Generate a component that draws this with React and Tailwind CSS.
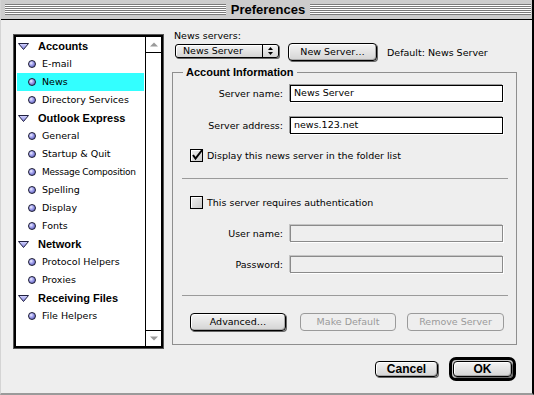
import React from "react";

const items = [
  { h: "Accounts" },
  { t: "E-mail" },
  { t: "News", sel: true },
  { t: "Directory Services" },
  { h: "Outlook Express" },
  { t: "General" },
  { t: "Startup & Quit" },
  { t: "Message Composition", tight: true },
  { t: "Spelling" },
  { t: "Display" },
  { t: "Fonts" },
  { h: "Network" },
  { t: "Protocol Helpers" },
  { t: "Proxies" },
  { h: "Receiving Files" },
  { t: "File Helpers" },
];

function Tri() {
  return (
    <svg width="11" height="7" viewBox="0 0 11 7" className="shrink-0">
      <defs>
        <linearGradient id="tg" x1="0" y1="0" x2="0" y2="1">
          <stop offset="0" stopColor="#d8d8ff" />
          <stop offset="1" stopColor="#8080e0" />
        </linearGradient>
      </defs>
      <path d="M0.5 0.5 H10.5 L5.5 6.5 Z" fill="url(#tg)" stroke="#202040" strokeWidth="1" strokeLinejoin="round" />
    </svg>
  );
}

function Bullet() {
  return (
    <span className="block w-[8px] h-[8px] shrink-0 rounded-full border border-[#1a1a33] bg-[radial-gradient(circle_at_35%_35%,#f0f0ff_0%,#a0a0ee_40%,#4a4aa0_100%)]" />
  );
}

function Btn({ children, className = "", disabled }) {
  return (
    <div
      className={`flex items-center justify-center whitespace-nowrap rounded-[4px] border text-[9.5px] leading-[12px] ${
        disabled
          ? "border-[#9a9a9a] text-[#9a9a9a] bg-[#eeeeee]"
          : "border-black text-black bg-[linear-gradient(#f4f4f4,#d4d4d4)] shadow-[inset_1px_1px_0_#ffffff,inset_-1px_-1px_0_#a8a8a8,1px_1px_0_#666666]"
      } ${className}`}
    >
      {children}
    </div>
  );
}

function CheckBox({ checked }) {
  return (
    <svg width="14" height="13" viewBox="0 0 14 13" className="shrink-0 overflow-visible">
      <defs>
        <linearGradient id="cbg" x1="0" y1="0" x2="1" y2="1">
          <stop offset="0" stopColor="#f2f2f2" />
          <stop offset="1" stopColor="#c8c8c8" />
        </linearGradient>
      </defs>
      <rect x="0.5" y="0.5" width="12" height="12" fill="url(#cbg)" stroke="#000" />
      <path d="M1.5 11.5 V1.5 H11.5" fill="none" stroke="#ffffff" />
      {checked && (
        <path d="M3 6 L5.5 9.5 L12.5 0.5" fill="none" stroke="#000" strokeWidth="2" strokeLinejoin="miter" />
      )}
    </svg>
  );
}

function Field({ label, value, disabled, className = "" }) {
  return (
    <div className={`flex items-center h-[17px] ${className}`}>
      <div className="w-[110px] text-right whitespace-nowrap text-[9.5px] leading-[12px]">{label}</div>
      <div
        className={`ml-[7px] w-[213px] h-[17px] flex items-center pl-[3px] text-[9.5px] ${
          disabled
            ? "border border-[#8a8a8a] bg-[#eeeeee] shadow-[-1px_-1px_0_#c4c4c4,1px_1px_0_#ffffff]"
            : "border border-black bg-white shadow-[-1px_-1px_0_#9a9a9a,1px_1px_0_#ffffff]"
        }`}
      >
        {value}
      </div>
    </div>
  );
}

function Check({ checked, text, className = "" }) {
  return (
    <div className={`flex items-center h-[13px] ml-[17px] gap-[3px] ${className}`}>
      <CheckBox checked={checked} />
      <span className="whitespace-nowrap text-[9.5px] leading-[12px]">{text}</span>
    </div>
  );
}

export default function App() {
  return (
    <div className="w-[534px] h-[395px] flex flex-col bg-[#eeeeee] border-l border-l-[#d4d4d4] border-r-2 border-r-black border-b-2 border-b-[#9a9a9a] font-['DejaVu_Sans',sans-serif] text-black overflow-hidden">
      {/* title bar */}
      <div className="h-[20px] shrink-0 bg-[#cccccc] border-b border-black flex items-center pl-[4px] pr-[1px] gap-[5px]">
        <div className="flex-1 h-[11px] bg-[repeating-linear-gradient(to_bottom,#7a7a7a_0px,#7a7a7a_1px,#ffffff_1px,#ffffff_2px)]" />
        <span className="font-['Liberation_Sans',Arial,sans-serif] font-bold text-[13px] leading-[16px]">Preferences</span>
        <div className="flex-1 h-[11px] bg-[repeating-linear-gradient(to_bottom,#7a7a7a_0px,#7a7a7a_1px,#ffffff_1px,#ffffff_2px)]" />
      </div>

      {/* body */}
      <div className="flex items-start pl-[12px]">
        {/* list box */}
        <div className="mt-[14px] w-[151px] h-[315px] border border-[#555555]">
          <div className="w-full h-full border-2 border-black flex bg-white">
            <div className="flex-1 min-w-0 px-[1px] flex flex-col overflow-hidden">
              {items.map((it, i) =>
                it.h ? (
                  <div key={i} className="h-[18px] flex items-center pl-[1px] gap-[9px]">
                    <Tri />
                    <span className="whitespace-nowrap font-['Liberation_Sans',Arial,sans-serif] font-bold text-[11px] leading-[13px]">{it.h}</span>
                  </div>
                ) : (
                  <div
                    key={i}
                    className={`h-[18px] flex items-center pl-[11px] gap-[6px] ${it.sel ? "bg-[#33ffff]" : ""}`}
                  >
                    <Bullet />
                    <span
                      className={`whitespace-nowrap leading-[12px] ${
                        it.tight ? "text-[9px] tracking-[-0.25px]" : "text-[9.5px]"
                      }`}
                    >
                      {it.t}
                    </span>
                  </div>
                )
              )}
            </div>
            <div className="w-[16px] shrink-0 border-l border-black flex flex-col">
              <div className="h-[16px] border-b border-black flex items-center justify-center">
                <svg width="8" height="5" viewBox="0 0 8 5">
                  <path d="M0 4.5 L4 0.5 L8 4.5 Z" fill="#9a9a9a" />
                </svg>
              </div>
              <div className="flex-1" />
              <div className="h-[16px] border-t border-black flex items-center justify-center">
                <svg width="8" height="5" viewBox="0 0 8 5">
                  <path d="M0 0.5 L4 4.5 L8 0.5 Z" fill="#9a9a9a" />
                </svg>
              </div>
            </div>
          </div>
        </div>

        {/* right column */}
        <div className="ml-[8px] mt-[9px] w-[345px] flex flex-col">
          <div className="h-[13px] pl-[2px] text-[9.5px] leading-[13px]">News servers:</div>
          <div className="mt-[1px] h-[19px] flex items-start">
            <div className="mt-[1px] ml-[3px] w-[104px] h-[14px] flex rounded-[3px] border border-black bg-[linear-gradient(#f4f4f4,#d4d4d4)] shadow-[inset_1px_1px_0_#ffffff,1px_1px_0_#666666]">
              <div className="flex-1 pl-[7px] flex items-center whitespace-nowrap text-[9.5px] leading-[12px]">News Server</div>
              <div className="w-[16px] border-l border-black flex flex-col items-center justify-center gap-[2px]">
                <svg width="5" height="3" viewBox="0 0 5 3">
                  <path d="M0 3 L2.5 0 L5 3 Z" fill="#000" />
                </svg>
                <svg width="5" height="3" viewBox="0 0 5 3">
                  <path d="M0 0 L2.5 3 L5 0 Z" fill="#000" />
                </svg>
              </div>
            </div>
            <Btn className="ml-[9px] w-[89px] h-[18px]">New Server…</Btn>
            <div className="ml-[10px] mt-[3px] whitespace-nowrap text-[9.5px] leading-[13px]">Default: News Server</div>
          </div>

          <fieldset className="mt-[4px] h-[279px] w-[345px] border border-[#8e8e8e] m-0 p-0 min-w-0">
            <legend className="ml-[10px] px-[3px] font-['Liberation_Sans',Arial,sans-serif] font-bold text-[11px] leading-[13px]">
              Account Information
            </legend>
            <div className="flex flex-col">
              <Field label="Server name:" value="News Server" className="mt-[6px]" />
              <Field label="Server address:" value="news.123.net" className="mt-[15px]" />
              <Check checked text="Display this news server in the folder list" className="mt-[15px]" />
              <div className="mt-[16px] ml-[9px] mr-[8px] border-t border-[#9a9a9a]" />
              <Check text="This server requires authentication" className="mt-[17px]" />
              <Field label="User name:" value="" disabled className="mt-[16px]" />
              <Field label="Password:" value="" disabled className="mt-[14px]" />
              <div className="mt-[22px] ml-[9px] mr-[8px] border-t border-[#9a9a9a]" />
              <div className="mt-[17px] flex">
                <Btn className="ml-[17px] w-[96px] h-[18px]">Advanced…</Btn>
                <Btn disabled className="ml-[14px] w-[96px] h-[18px]">Make Default</Btn>
                <Btn disabled className="ml-[11px] w-[97px] h-[18px]">Remove Server</Btn>
              </div>
            </div>
          </fieldset>
        </div>
      </div>

      {/* bottom buttons */}
      <div className="mt-[8px] h-[24px] flex items-center justify-end pr-[16px] gap-[11px]">
        <Btn className="w-[63px] h-[16px] font-['Liberation_Sans',Arial,sans-serif] font-bold !text-[12px]">Cancel</Btn>
        <div className="w-[67px] h-[24px] rounded-[7px] border-[3px] border-black p-[1px] bg-[#c8c8c8]">
          <Btn className="w-full h-full font-['Liberation_Sans',Arial,sans-serif] font-bold !text-[12px]">OK</Btn>
        </div>
      </div>
    </div>
  );
}
